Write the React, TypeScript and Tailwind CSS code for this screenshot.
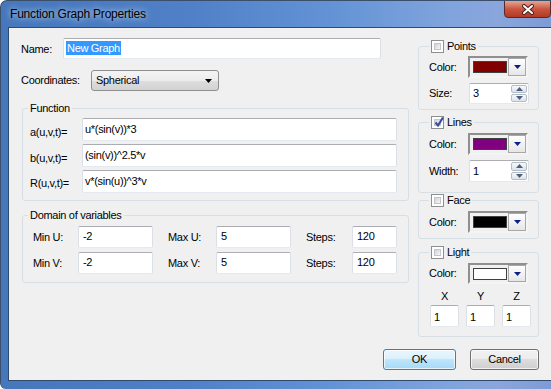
import React from 'react';

const Arrow = ({ color = '#0b1f8a' }: { color?: string }) => (
  <svg width="7" height="4" viewBox="0 0 7 4">
    <path d="M0 0h7L3.5 4z" fill={color} />
  </svg>
);

const CheckBox = ({ checked = false }: { checked?: boolean }) => (
  <span className="relative flex w-[13px] h-[13px] border border-[#8e8f8f] bg-white p-[2px]">
    <span className="flex-1 border border-[#c2c6cb] bg-gradient-to-br from-[#cfd3d8] to-[#f7f7f7]" />
    {checked && (
      <svg className="absolute left-[1px] top-[-1px]" width="12" height="12" viewBox="0 0 12 12">
        <path d="M2.5 6.5 L5 9.5 L10 1.5" fill="none" stroke="#3a4f9c" strokeWidth="2.2" />
      </svg>
    )}
  </span>
);

const Field = ({ className = '', children }: { className?: string; children?: React.ReactNode }) => (
  <div
    className={`flex items-start pt-[2px] pl-[2px] bg-white border border-[#dbdfe6] border-t-[#abadb3] border-b-[#e3e9ef] rounded-[2px] whitespace-nowrap leading-[14px] ${className}`}
  >
    {children}
  </div>
);

const ColorPick = ({ swatch, h }: { swatch: string; h: string }) => (
  <div
    className={`flex items-center w-[60px] ${h} border-2 border-t-[#8f8f8f] border-l-[#8f8f8f] border-r-[#f4f4f4] border-b-[#f4f4f4] bg-[#f0f0f0] pl-[3px]`}
  >
    <span className={`w-[34px] h-[12px] border border-[#404040] ${swatch}`} />
    <span className="ml-auto flex items-center justify-center w-[18px] h-full border border-[#a8a8a8] bg-gradient-to-b from-white to-[#e6e6e6]">
      <Arrow />
    </span>
  </div>
);

const Spin = ({ value, h }: { value: string; h: string }) => (
  <div className={`flex w-[60px] ${h} bg-white border border-[#dbdfe6] border-t-[#abadb3] border-b-[#e3e9ef] rounded-[2px]`}>
    <span className="flex-1 flex items-center pl-[3px]">{value}</span>
    <div className="flex flex-col w-[18px] gap-[1px] p-[1px]">
      <span className="flex-1 flex items-center justify-center border border-[#b3bdc8] rounded-[2px] bg-gradient-to-b from-[#f7f9fb] to-[#dde3ea]">
        <svg width="7" height="4" viewBox="0 0 7 4"><path d="M0 4h7L3.5 0z" fill="#4e5f7d" /></svg>
      </span>
      <span className="flex-1 flex items-center justify-center border border-[#b3bdc8] rounded-[2px] bg-gradient-to-b from-[#f7f9fb] to-[#dde3ea]">
        <Arrow color="#4e5f7d" />
      </span>
    </div>
  </div>
);

const App: React.FC = () => {
  return (
    <div className="w-[551px] h-[389px] flex flex-col overflow-hidden rounded-tl-[7px] rounded-bl-[6px] border-l border-t border-[#3b4f6b] bg-[linear-gradient(90deg,#4677bb_0%,#5081c8_35%,#6393d5_60%,#7ea3dc_80%,#8aa6dc_90%,#7d9bd6_100%)] font-['Liberation_Sans',Arial,sans-serif] text-[11px] tracking-[-0.3px] text-black">
      {/* title bar */}
      <div className="h-[26px] flex items-start justify-between pl-[9px]">
        <span className="mt-[4px] text-[12px] tracking-[-0.2px] [text-shadow:0_0_6px_rgba(255,255,255,0.9)]">
          Function Graph Properties
        </span>
        <div className="mt-[-1px] w-[47px] h-[18px] flex items-center justify-center rounded-b-[4px] border border-[#5a2a2a] bg-gradient-to-b from-[#e6a592] via-[#c9553f] to-[#b23a24]">
          <svg width="14" height="11" viewBox="0 0 14 11">
            <path d="M3 2 L11 9 M11 2 L3 9" stroke="#4a2020" strokeWidth="4" strokeLinecap="round" />
            <path d="M3 2 L11 9 M11 2 L3 9" stroke="#ffffff" strokeWidth="2" strokeLinecap="round" />
          </svg>
        </div>
      </div>

      {/* client */}
      <div className="ml-[7px] mb-[8px] flex-1 flex flex-col bg-[#f0f0f0] border-l border-t border-b border-[#2f4a6b]">
        <div className="flex">
          {/* left column */}
          <div className="w-[400px] pl-[12px] pt-[10px] flex flex-col">
            <div className="flex items-center h-[21px]">
              <span className="w-[42px] pt-[2px]">Name:</span>
              <Field className="w-[318px] h-[21px]">
                <span className="bg-[#3399ff] text-white px-[1px] leading-[14px]">New Graph</span>
              </Field>
            </div>
            <div className="flex items-center h-[21px] mt-[11px]">
              <span className="w-[70px]">Coordinates:</span>
              <div className="w-[128px] h-[21px] flex items-center justify-between pl-[4px] pr-[6px] rounded-[3px] border border-[#8e8f8f] bg-[linear-gradient(#f4f4f4_0%,#ececec_50%,#dedede_50%,#d2d2d2_100%)]">
                <span>Spherical</span>
                <Arrow color="#000000" />
              </div>
            </div>

            <fieldset className="ml-[1px] mt-[11px] w-[387px] border border-[#d5dfe5] rounded-[3px] pl-[7px] pt-[3px] pb-[7px]">
              <legend className="ml-[-2px] px-[2px] leading-[13px]">Function</legend>
              <div className="flex flex-col gap-[3px]">
                <div className="flex items-center h-[23px]">
                  <span className="w-[52px] pt-[6px]">a(u,v,t)=</span>
                  <Field className="w-[315px] h-[23px] pt-[3px]">u*(sin(v))*3</Field>
                </div>
                <div className="flex items-center h-[23px]">
                  <span className="w-[52px] pt-[6px]">b(u,v,t)=</span>
                  <Field className="w-[315px] h-[23px] pt-[3px]">(sin(v))^2.5*v</Field>
                </div>
                <div className="flex items-center h-[23px]">
                  <span className="w-[52px] pt-[4px]">R(u,v,t)=</span>
                  <Field className="w-[315px] h-[23px] pt-[3px]">v*(sin(u))^3*v</Field>
                </div>
              </div>
            </fieldset>

            <fieldset className="ml-[1px] mt-[8px] w-[387px] border border-[#d5dfe5] rounded-[3px] pl-[10px] pt-[4px] pb-[8px]">
              <legend className="ml-[-5px] px-[2px] leading-[13px]">Domain of variables</legend>
              <div className="flex flex-col gap-[4px]">
                {[
                  ['Min U:', 'Max U:'],
                  ['Min V:', 'Max V:'],
                ].map(([a, b]) => (
                  <div key={a} className="flex items-center h-[22px]">
                    <span className="w-[45px]">{a}</span>
                    <Field className="w-[75px] h-[22px] pl-[4px]">-2</Field>
                    <span className="ml-[15px] w-[48px]">{b}</span>
                    <Field className="w-[75px] h-[22px] pl-[4px]">5</Field>
                    <span className="ml-[15px] w-[46px]">Steps:</span>
                    <Field className="w-[45px] h-[22px] pl-[4px]">120</Field>
                  </div>
                ))}
              </div>
            </fieldset>
          </div>

          {/* right column */}
          <div className="ml-[9px] w-[121px] pt-[12px] flex flex-col">
            <fieldset className="border border-[#d5dfe5] rounded-[3px] pl-[10px] pt-[3px] pb-[5px]">
              <legend className="px-[2px] flex items-center gap-[3px] leading-[13px]">
                <CheckBox />
                <span>Points</span>
              </legend>
              <div className="flex items-center h-[22px]">
                <span className="w-[39px]">Color:</span>
                <ColorPick swatch="bg-[#800000]" h="h-[22px]" />
              </div>
              <div className="flex items-center h-[21px] mt-[5px]">
                <span className="w-[40px]">Size:</span>
                <Spin value="3" h="h-[21px]" />
              </div>
            </fieldset>

            <fieldset className="mt-[6px] border border-[#d5dfe5] rounded-[3px] pl-[10px] pt-[4px] pb-[10px]">
              <legend className="px-[2px] flex items-center gap-[3px] leading-[13px]">
                <CheckBox checked />
                <span>Lines</span>
              </legend>
              <div className="flex items-center h-[22px]">
                <span className="w-[39px]">Color:</span>
                <ColorPick swatch="bg-[#800080]" h="h-[22px]" />
              </div>
              <div className="flex items-center h-[22px] mt-[5px]">
                <span className="w-[40px]">Width:</span>
                <Spin value="1" h="h-[22px]" />
              </div>
            </fieldset>

            <fieldset className="mt-[1px] border border-[#d5dfe5] rounded-[3px] pl-[10px] pt-[4px] pb-[5px]">
              <legend className="px-[2px] flex items-center gap-[3px] leading-[13px]">
                <CheckBox />
                <span>Face</span>
              </legend>
              <div className="flex items-center h-[22px]">
                <span className="w-[39px]">Color:</span>
                <ColorPick swatch="bg-black" h="h-[22px]" />
              </div>
            </fieldset>

            <fieldset className="mt-[7px] border border-[#d5dfe5] rounded-[3px] pl-[10px] pt-[4px] pb-[9px]">
              <legend className="px-[2px] flex items-center gap-[3px] leading-[13px]">
                <CheckBox />
                <span>Light</span>
              </legend>
              <div className="flex items-center h-[21px]">
                <span className="w-[39px]">Color:</span>
                <ColorPick swatch="bg-white" h="h-[21px]" />
              </div>
              <div className="ml-[1px] mt-[6px] grid grid-cols-[29px_29px_29px] gap-x-[7px]">
                <span className="text-center leading-[13px]">X</span>
                <span className="text-center leading-[13px]">Y</span>
                <span className="text-center leading-[13px]">Z</span>
                <Field className="mt-[2px] h-[22px] pt-[4px] pl-[3px]">1</Field>
                <Field className="mt-[2px] h-[22px] pt-[4px] pl-[3px]">1</Field>
                <Field className="mt-[2px] h-[22px] pt-[4px] pl-[3px]">1</Field>
              </div>
            </fieldset>
          </div>
        </div>

        {/* buttons */}
        <div className="mt-[12px] flex justify-end gap-[14px] pr-[12px]">
          <button className="w-[73px] h-[21px] rounded-[3px] border border-[#3c7fb1] bg-[linear-gradient(#eaf6fd_0%,#d9f0fc_50%,#bee6fd_50%,#a7d9f5_100%)] shadow-[inset_0_0_0_1px_rgba(255,255,255,0.7)]">
            OK
          </button>
          <button className="w-[69px] h-[21px] rounded-[3px] border border-[#707070] bg-[linear-gradient(#f2f2f2_0%,#ebebeb_50%,#dddddd_50%,#cfcfcf_100%)] shadow-[inset_0_0_0_1px_rgba(255,255,255,0.7)]">
            Cancel
          </button>
        </div>
      </div>
    </div>
  );
};

export default App;
